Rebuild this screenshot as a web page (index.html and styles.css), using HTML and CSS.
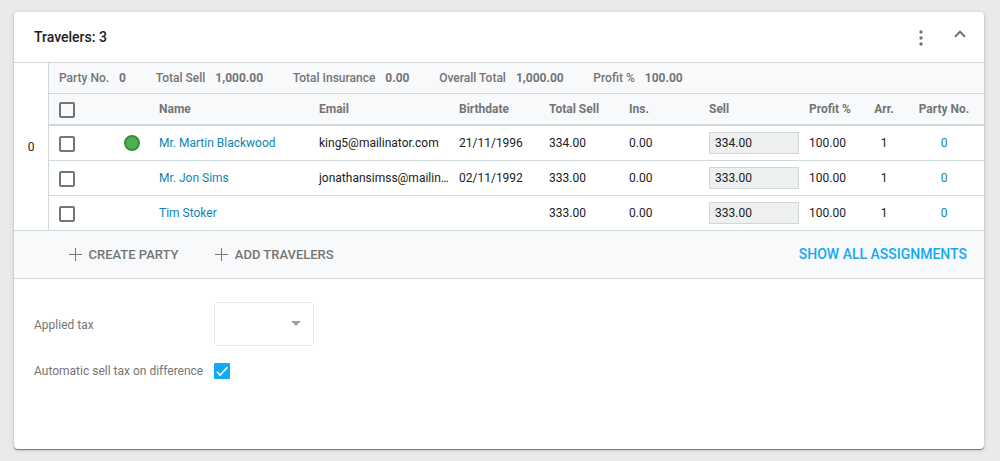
FILE: index.html
```html
<!DOCTYPE html>
<html lang="en">
<head>
<meta charset="utf-8">
<title>Travelers</title>
<link rel="stylesheet" href="styles.css">
</head>
<body>
<main class="card">
  <header class="card-header">
    <h1 class="title">Travelers: 3</h1>
    <svg class="more" width="6" height="18" viewBox="0 0 6 18"><circle cx="3" cy="3" r="1.7"/><circle cx="3" cy="9" r="1.7"/><circle cx="3" cy="15" r="1.7"/></svg>
    <svg class="collapse" width="12" height="8" viewBox="0 0 12 8"><path d="M1 6.7 6 1.7 11 6.7"/></svg>
  </header>
  <section class="party">
    <div class="party-number">0</div>
    <div class="party-body">
      <div class="summary">
        <span class="stat stat-party">Party No.<b>0</b></span>
        <span class="stat">Total Sell<b>1,000.00</b></span>
        <span class="stat">Total Insurance<b>0.00</b></span>
        <span class="stat">Overall Total<b>1,000.00</b></span>
        <span class="stat">Profit %<b>100.00</b></span>
      </div>
      <div class="row head">
        <span><i class="check"></i></span><span>Name</span><span>Email</span><span>Birthdate</span><span>Total Sell</span><span>Ins.</span><span>Sell</span><span>Profit %</span><span class="center">Arr.</span><span class="center">Party No.</span>
      </div>
      <div class="row">
        <span class="select"><i class="check"></i><i class="status"></i></span><a>Mr. Martin Blackwood</a><span>king5@mailinator.com</span><span>21/11/1996</span><span>334.00</span><span>0.00</span><span class="sell"><span class="field">334.00</span></span><span>100.00</span><span class="center">1</span><a class="center">0</a>
      </div>
      <div class="row">
        <span class="select"><i class="check"></i></span><a>Mr. Jon Sims</a><span>jonathansimss@mailin…</span><span>02/11/1992</span><span>333.00</span><span>0.00</span><span class="sell"><span class="field">333.00</span></span><span>100.00</span><span class="center">1</span><a class="center">0</a>
      </div>
      <div class="row">
        <span class="select"><i class="check"></i></span><a>Tim Stoker</a><span></span><span></span><span>333.00</span><span>0.00</span><span class="sell"><span class="field">333.00</span></span><span>100.00</span><span class="center">1</span><a class="center">0</a>
      </div>
    </div>
  </section>
  <div class="actions">
    <span class="action"><svg class="plus" width="13" height="13" viewBox="0 0 13 13"><path d="M0 6.5h13M6.5 0v13"/></svg>CREATE PARTY</span>
    <span class="action"><svg class="plus" width="13" height="13" viewBox="0 0 13 13"><path d="M0 6.5h13M6.5 0v13"/></svg>ADD TRAVELERS</span>
    <a class="show-all">SHOW ALL ASSIGNMENTS</a>
  </div>
  <section class="tax">
    <div class="option applied"><span class="label">Applied tax</span><span class="dropdown"><svg width="10" height="5" viewBox="0 0 10 5"><path d="M0 0h10L5 5z"/></svg></span></div>
    <div class="option"><span class="label">Automatic sell tax on difference</span><span class="checked"><svg width="16" height="16" viewBox="0 0 16 16"><path d="M3 8.8 6 12 13.5 4.2"/></svg></span></div>
  </section>
</main>
</body>
</html>
```
FILE: styles.css
```css
* { box-sizing: border-box; }
body { margin: 0; padding: 12px 16px 12px 14px; height: 461px; background: #eaeaea; font: 12px/16px Roboto, sans-serif; color: #212121; overflow: hidden; }
.card { height: 437px; background: #fff; border-radius: 4px; box-shadow: 0 1px 1px rgba(0,0,0,.45), 0 1px 4px rgba(0,0,0,.16); overflow: hidden; }
.card-header { display: flex; height: 51px; padding: 0 18px 0 20px; align-items: center; border-bottom: 1px solid #cfd8dc; }
.title { flex: 1; margin: 0; font-size: 14px; font-weight: 500; line-height: 20px; }
.more { fill: #757575; margin-right: 30px; margin-top: 1px; }
.collapse { fill: none; stroke: #757575; stroke-width: 2; margin-bottom: 6px; }
.party { display: flex; height: 168px; border-bottom: 1px solid #cfd8dc; }
.party-number { width: 35px; display: flex; align-items: center; justify-content: center; border-right: 1px solid #cfd8dc; }
.party-body { flex: 1; }
.summary { display: flex; gap: 29.7px; height: 31px; padding: 0 10px; align-items: center; background: #f8f9fb; border-bottom: 1px solid #cfd8dc; color: #757575; font-weight: 500; }
.stat b { margin-left: 10px; font-weight: 700; }
.row { display: grid; grid-template-columns: 100px 160px 140px 90px 80px 80px 100px 65px 40px 80px; height: 35px; align-items: center; border-bottom: 1px solid #cfd8dc; }
.row:last-child { border-bottom-color: transparent; }
.row > * { padding-left: 10px; white-space: nowrap; }
.head { height: 32px; background: #f8f9fb; border-bottom-width: 2px; color: #757575; font-weight: 700; }
.row > .center { padding: 0; text-align: center; }
.select { display: flex; align-items: center; gap: 49px; }
.check { display: block; flex: none; width: 16px; height: 16px; border: 2px solid #757575; border-radius: 2px; margin-top: 2px; }
.status { width: 16px; height: 16px; border: 2px solid #388e3c; border-radius: 50%; background: #4caf50; }
a { color: #0d85b0; }
.field { display: block; width: 90px; height: 22px; padding: 0 5px; line-height: 20px; border: 1px solid #cfd8dc; background: #eeefef; }
.actions { display: flex; height: 48px; padding: 0 17px 0 54.5px; align-items: center; background: #f8f9fb; border-bottom: 1px solid #cfd8dc; font-size: 13px; font-weight: 500; color: #757575; }
.action { display: flex; align-items: center; gap: 7px; margin-right: 36.3px; }
.plus { fill: none; stroke: #757575; stroke-width: 1; }
.show-all { margin: 0 0 1px auto; font-size: 14px; color: #14a9f0; }
.tax { padding: 23px 20px; color: #757575; }
.option { display: flex; align-items: center; }
.applied { height: 44px; margin-bottom: 17px; }
.applied .label { padding-top: 2px; }
.label { width: 180px; }
.dropdown { display: flex; width: 100px; height: 44px; padding: 0 12px 2px; align-items: center; justify-content: flex-end; border: 1px solid #e9e9e9; border-radius: 4px; fill: #9e9e9e; }
.checked { width: 16px; height: 16px; border-radius: 1px; background: #14a9f4; fill: none; stroke: #fff; stroke-width: 1.6; }
.checked svg { display: block; }
```
